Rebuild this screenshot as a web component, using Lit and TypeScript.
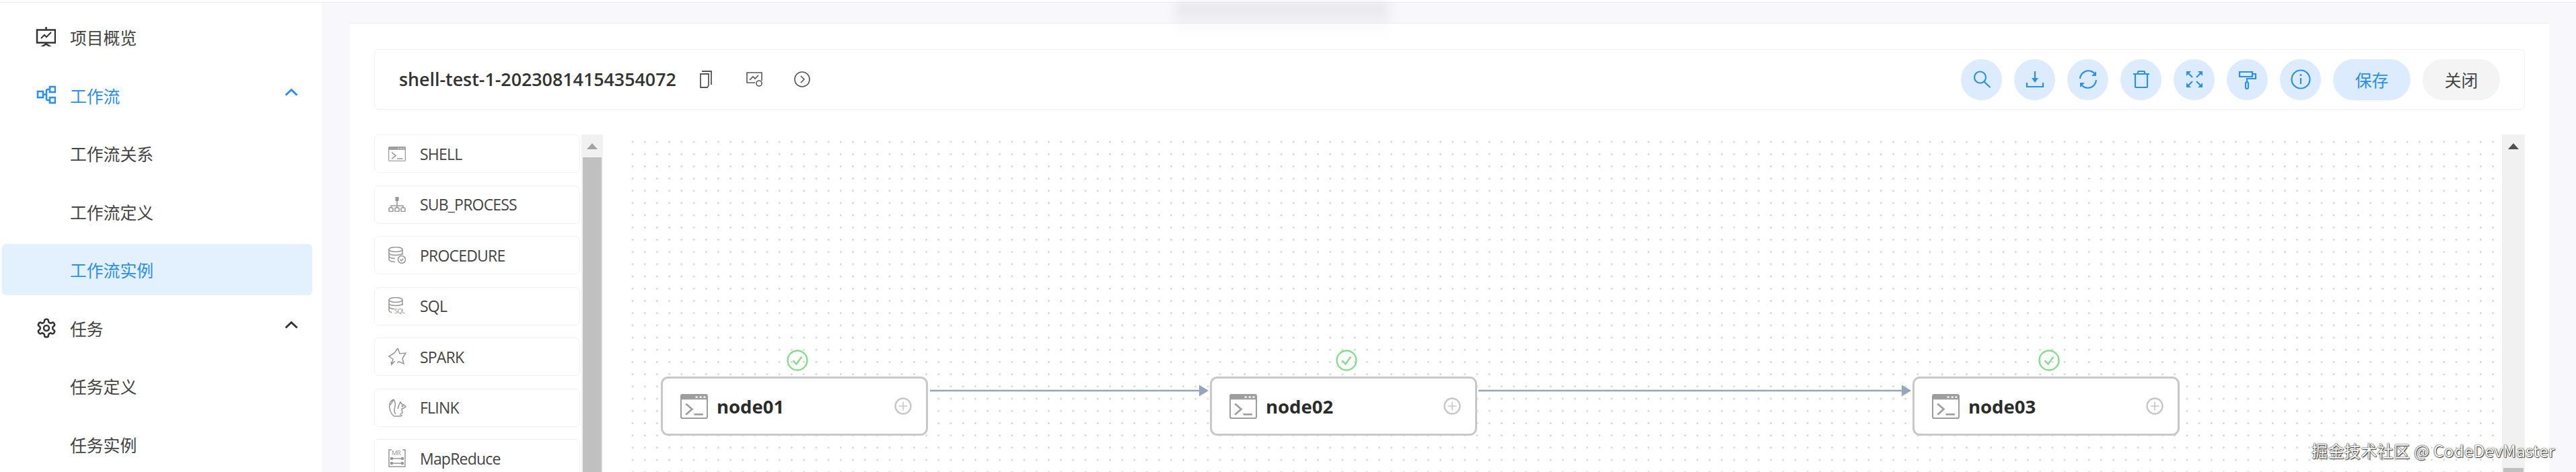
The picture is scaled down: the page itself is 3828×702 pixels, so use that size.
import { LitElement, html, css, svg } from "lit";
import { customElement } from "lit/decorators.js";

const terminal = (w: number, h: number) => html`<svg width=${w} height=${h} viewBox="0 0 40 36" preserveAspectRatio="none" fill="none">
  <rect x="1" y="1" width="38" height="34" rx="2" stroke="#9e9e9e" stroke-width="2"/>
  <rect x="1" y="1" width="38" height="7" fill="#9e9e9e"/>
  <path d="M22 4.500h3M28 4.500h3M33.500 4.500h3" stroke="#fff" stroke-width="2"/>
  <path d="M8 14l9 8-9 8" stroke="#9e9e9e" stroke-width="2.600"/>
  <path d="M20 29.500h13" stroke="#9e9e9e" stroke-width="2.600"/>
</svg>`;

const I = (w: number, h: number, body: unknown) => html`<svg width=${w} height=${h} viewBox="0 0 ${w} ${h}" fill="none" stroke="#969696" stroke-width="1.500">${body}</svg>`;

const toolIcons: Record<string, unknown> = {
  SHELL: terminal(26, 22),
  SUB_PROCESS: I(26, 22, svg`<rect x="10.500" y="0" width="5" height="6" fill="#969696" stroke="none"/><path d="M13 6v7M4 16v-3h18v3M13 13v3"/><rect x="1" y="16" width="6" height="5.500" rx="1"/><rect x="10" y="16" width="6" height="5.500" rx="1"/><rect x="19" y="16" width="6" height="5.500" rx="1"/>`),
  PROCEDURE: I(26, 26, svg`<ellipse cx="11" cy="4" rx="10" ry="3.500"/><path d="M1 4v15c0 2 4 3.500 9 3.500M21 4v8M1 9c0 2 4 3.500 10 3.500S21 11 21 9M1 14c0 2 4 3.500 9 3.500"/><circle cx="20" cy="19" r="5.500"/><path d="M17.500 19l2 2 3-3.500"/>`),
  SQL: I(27, 26, svg`<ellipse cx="11" cy="4" rx="10" ry="3.500"/><path d="M1 4v15c0 2 2 3.500 4 3.500M21 4v8M1 9c0 2 4 3.500 10 3.500S21 11 21 9M1 14c0 2 4 3.500 8 3.500"/><text x="9" y="24" font-size="9.500" font-family="Open Sans" fill="#969696" stroke="none">SQL</text>`),
  SPARK: I(27, 28, svg`<path d="M14 1l3 8 9-1-5 8 2 8-7-3-3 1M9 8l5-7M9 8L1 13l6 4-2 8 5-5M5 25l-1-4"/>`),
  FLINK: I(28, 27, svg`<path d="M8 1C3 3 1 8 2 14c1 6 3 10 7 12h8c2 0 3-1 3-2M8 1c2 3 3 6 2 10-1 5-2 8 1 12M3 9c2-2 3-4 5-8M14 15l2-6 2-4 2 3 3 1 3 3-3 2-3 1 1 6-4 3"/><circle cx="21" cy="11" r=".8" fill="#969696"/>`),
  MapReduce: I(26, 27, svg`<path d="M5 1H1v25h24V1h-4"/><path d="M4 14h18M4 21h18"/><circle cx="5" cy="14" r="1.500" fill="#969696"/><circle cx="21" cy="14" r="1.500" fill="#969696"/><circle cx="5" cy="21" r="1.500" fill="#969696"/><circle cx="21" cy="21" r="1.500" fill="#969696"/><text x="5" y="9" font-size="9.500" font-family="Open Sans" fill="#969696" stroke="none">MR</text>`),
};

const B = (body: unknown) => html`<svg width="30" height="30" viewBox="0 0 30 30" fill="none" stroke="#2a8ff0" stroke-width="2.200">${body}</svg>`;
const toolbar = [
  B(svg`<circle cx="12.500" cy="12" r="8.500"/><path d="M18.500 18.500l9 8.500"/>`),
  B(svg`<path d="M15 3v13"/><path d="M3 20v6h24v-6"/><path d="M10 13h10l-5 7z" fill="#2a8ff0" stroke="none"/>`),
  B(svg`<path d="M3 14a12.500 12.500 0 0 1 23-6M27 16a12.500 12.500 0 0 1-23 6"/><path d="M27 3v7h-7z M3 27v-7h7z" fill="#2a8ff0" stroke="none"/>`),
  B(svg`<path d="M3 7h24M10 7V4q0-1 1-1h8q1 0 1 1v3M6 7v19q0 1 1 1h16q1 0 1-1V7"/>`),
  B(svg`<path d="M5 5l7 7M25 5l-7 7M5 25l7-7M25 25l-7-7" /><path d="M3 3h7l-7 7zM27 3h-7l7 7zM3 27h7l-7-7zM27 27h-7l7-7z" fill="#2a8ff0" stroke="none"/>`),
  B(svg`<path d="M3 4h19v7H3zM22 7h5v7H14v5"/><rect x="12" y="19" width="4" height="10" rx="2"/>`),
  B(svg`<circle cx="15" cy="15" r="13.500"/><path d="M15 13v9"/><circle cx="15" cy="8.500" r="1.500" fill="#2a8ff0" stroke="none"/>`),
];

const nodes = [
  { name: "node01", left: 51 },
  { name: "node02", left: 867 },
  { name: "node03", left: 1911 },
];

@customElement("app-root")
export class AppRoot extends LitElement {
  static styles = css`
    :host { display: block; width: 3828px; height: 702px; overflow: hidden; background: #fff; font-family: "Noto Sans CJK SC", sans-serif; position: relative; }
    .topline { height: 4px; box-sizing: border-box; border-bottom: 1px solid #eaebee; }
    .shell { display: flex; height: 698px; }
    .side { width: 478px; flex: none; padding: 13px 14px 0 3px; box-sizing: border-box; display: flex; flex-direction: column; gap: 10.500px; background: #fff; }
    .mi { height: 76px; flex: none; display: flex; align-items: center; border-radius: 6px; padding-left: 101px; font-size: 24.800px; color: #444; position: relative; }
    .mi.blue { color: #2a8ff0; }
    .mi.active { background: #e3f1fe; }
    .mi svg.ic { position: absolute; left: 50px; top: 22px; }
    .mi svg.chev { position: absolute; left: 420px; top: 27px; }
    .main { flex: 1; background: #f8f8fc; padding: 30px 40px 0 42px; min-width: 0; position: relative; }
    .blob { position: absolute; z-index: 2; left: 1269px; top: -1px; width: 317px; height: 54px; pointer-events: none; background: linear-gradient(rgba(0,0,0,.075), rgba(0,0,0,.025) 60%, rgba(0,0,0,.012) 62%, transparent); filter: blur(8px); }
    .panel { background: #fff; height: 100%; box-sizing: border-box; padding: 38px 36px 0; position: relative; border-top: 1px solid #ecedf1; }
    .head { height: 90px; box-sizing: border-box; border: 1px solid #f0f0f1; border-radius: 7px; display: flex; align-items: center; padding: 0 36px; }
    .title { font: 600 26.800px "Open Sans", sans-serif; color: #333; margin: -2px 33px 0 0; }
    .ghost { display: flex; align-items: center; gap: 46px; }
    .ghost svg { display: block; }
    .spacer { flex: 1; }
    .btns { display: flex; gap: 18px; }
    .circle { width: 61px; height: 61px; border-radius: 50%; background: #dcecfe; display: flex; align-items: center; justify-content: center; }
    .pill { width: 115px; height: 61px; border-radius: 31px; display: flex; align-items: center; justify-content: center; font-size: 24.800px; }
    .save { background: #dcecfe; color: #2a8ff0; }
    .close { background: #f4f4f4; color: #444; }
    .body { display: flex; margin-top: 37px; height: 520px; }
    .left { width: 340px; flex: none; display: flex; gap: 2px; }
    .list { width: 306px; flex: none; display: flex; flex-direction: column; gap: 18.500px; }
    .it { height: 57px; flex: none; box-sizing: border-box; border: 1px solid #f1f1f2; border-radius: 7px; display: flex; align-items: center; padding-left: 20px; font: 400 23px "Open Sans", sans-serif; color: #444; letter-spacing: -0.800px; }
    .icw { width: 47px; flex: none; display: flex; align-items: center; }
    .track { width: 32px; flex: none; display: flex; flex-direction: column; background: #f1f1f1; }
    .up { height: 34px; flex: none; display: flex; align-items: center; justify-content: center; }
    .up i { width: 0; height: 0; border: 8px solid transparent; border-top: 0; border-bottom: 9px solid #a3a3a3; }
    .thumb { flex: 1; background: #c0c0c0; margin: 0 2px; }
    .canvas { flex: 1; margin-left: 35px; position: relative; background-image: radial-gradient(circle, #d2d2d2 1.100px, transparent 1.500px); background-size: 18.200px 18.200px; background-position: 0 2px; }
    .edges { position: absolute; left: 0; top: 0; pointer-events: none; }
    .node { position: absolute; top: 360px; width: 397px; height: 88px; box-sizing: border-box; border: 3px solid #c8c8c8; border-radius: 11px; background: #fff; display: flex; align-items: center; padding: 0 21px 0 26px; font: 700 27.500px "Open Sans", sans-serif; color: #2b2b2b; gap: 13px; }
    .node .plus { margin-left: auto; }
    .ok { position: absolute; left: 184px; top: -43px; }
    .node svg { flex: none; display: block; }
    .vbar { width: 34px; flex: none; background: #f1f1f1; display: flex; flex-direction: column; }
    .vbar .up i { border-bottom-color: #505050; }
    .vgap { flex: 1; }
    .vthumb { height: 24px; background: #c0c0c0; margin: 0 2px; }
    .mark { position: absolute; left: 3435px; top: 652px; font-size: 24px; color: #fff; letter-spacing: 0.400px; white-space: nowrap; text-shadow: 0 0 2px #222, 0 0 1px #222, 1px 1px 1px #444; font-family: "Noto Sans CJK SC", sans-serif; }
  `;

  render() {
    const chev = (c: string) => html`<svg class="chev" width="20" height="12" viewBox="0 0 20 12" fill="none" stroke=${c} stroke-width="3"><path d="M1.500 10.500L10 2.500l8.500 8"/></svg>`;
    return html`
      <div class="topline"></div>
      <div class="shell">
        <aside class="side">
          <div class="mi"><svg class="ic" width="30" height="30" viewBox="0 0 30 30" fill="none" stroke="#333" stroke-width="2.500"><path d="M2 5.500h27v19H2zM15.500 1v4.500M15.500 24.500v2M8 31l7.500-4.500L23 31"/><path d="M8 18l5-5 3 3 7-7" stroke-width="2"/></svg>项目概览</div>
          <div class="mi blue"><svg class="ic" width="30" height="30" viewBox="0 0 30 30" fill="none" stroke="#2a8ff0" stroke-width="2.600"><rect x="3" y="10" width="8" height="9"/><rect x="21" y="3" width="8" height="8"/><rect x="21" y="19" width="8" height="8"/><path d="M11 14.500h5M16 7v16M16 7h5M16 23h5"/></svg>工作流${chev("#2a8ff0")}</div>
          <div class="mi">工作流关系</div>
          <div class="mi">工作流定义</div>
          <div class="mi blue active">工作流实例</div>
          <div class="mi"><svg class="ic" width="32" height="32" viewBox="0 0 24 24" fill="none" stroke="#333" stroke-width="1.900"><path d="M12.220 2h-.44a2 2 0 0 0-2 2v.18a2 2 0 0 1-1 1.730l-.43.250a2 2 0 0 1-2 0l-.15-.080a2 2 0 0 0-2.730.730l-.22.380a2 2 0 0 0 .730 2.730l.15.100a2 2 0 0 1 1 1.720v.510a2 2 0 0 1-1 1.740l-.15.090a2 2 0 0 0-.730 2.730l.22.380a2 2 0 0 0 2.730.730l.15-.080a2 2 0 0 1 2 0l.43.250a2 2 0 0 1 1 1.730V20a2 2 0 0 0 2 2h.44a2 2 0 0 0 2-2v-.18a2 2 0 0 1 1-1.730l.43-.25a2 2 0 0 1 2 0l.15.080a2 2 0 0 0 2.730-.730l.22-.39a2 2 0 0 0-.730-2.730l-.15-.080a2 2 0 0 1-1-1.740v-.5a2 2 0 0 1 1-1.740l.15-.09a2 2 0 0 0 .730-2.730l-.22-.38a2 2 0 0 0-2.730-.730l-.15.080a2 2 0 0 1-2 0l-.43-.25a2 2 0 0 1-1-1.730V4a2 2 0 0 0-2-2z"/><circle cx="12" cy="12" r="3"/></svg>任务${chev("#333")}</div>
          <div class="mi">任务定义</div>
          <div class="mi">任务实例</div>
        </aside>
        <main class="main">
          <div class="blob"></div>
          <section class="panel">
            <div class="head">
              <span class="title">shell-test-1-20230814154354072</span>
              <div class="ghost">
                <svg width="24" height="26" viewBox="0 0 24 26" fill="none" stroke="#555" stroke-width="1.800"><path d="M5 1h14v20M3 5h12v17l-2 3H3z"/></svg>
                <svg width="26" height="24" viewBox="0 0 26 24" fill="none" stroke="#555" stroke-width="1.600"><path d="M14 17H2V2h22v12M6 13l5-5 3 3 5-5"/><circle cx="20" cy="18" r="4"/></svg>
                <svg width="24" height="24" viewBox="0 0 24 24" fill="none" stroke="#555" stroke-width="1.600"><circle cx="12" cy="12" r="11"/><path d="M10 7l5 5-5 5"/></svg>
              </div>
              <div class="spacer"></div>
              <div class="btns">
                ${toolbar.map((b) => html`<div class="circle">${b}</div>`)}
                <div class="pill save">保存</div>
                <div class="pill close">关闭</div>
              </div>
            </div>
            <div class="body">
              <div class="left">
                <div class="list">
                  ${["SHELL", "SUB_PROCESS", "PROCEDURE", "SQL", "SPARK", "FLINK", "MapReduce"].map(
                    (t) => html`<div class="it"><span class="icw">${toolIcons[t]}</span>${t}</div>`
                  )}
                </div>
                <div class="track"><div class="up"><i></i></div><div class="thumb"></div></div>
              </div>
              <div class="canvas">
                <svg class="edges" width="2800" height="500" fill="none">
                  <path d="M451 381H851" stroke="#94a6bc" stroke-width="2.500"/>
                  <path d="M865 381l-14-8.500v17z" fill="#94a6bc"/>
                  <path d="M1266 381H1895" stroke="#94a6bc" stroke-width="2.500"/>
                  <path d="M1909 381l-14-8.500v17z" fill="#94a6bc"/>
                </svg>
                ${nodes.map(
                  (n) => html`<div class="node" style="left:${n.left}px">
                    <svg class="ok" width="32" height="32" viewBox="0 0 32 32" fill="none" stroke="#85dc8f" stroke-width="2.400"><circle cx="16" cy="16" r="14.500"/><path d="M9.500 16l5 5.500 8-11"/></svg>
                    ${terminal(41, 37)}${n.name}
                    <svg class="plus" width="26" height="26" viewBox="0 0 26 26" fill="none" stroke="#c8c8c8" stroke-width="2.400"><circle cx="13" cy="13" r="11.500"/><path d="M13 6.500v13M6.500 13h13" stroke-width="1.600"/></svg>
                  </div>`
                )}
              </div>
              <div class="vbar"><div class="up"><i></i></div><div class="vgap"></div><div class="vthumb"></div></div>
            </div>
          </section>
        </main>
      </div>
      <div class="mark">掘金技术社区 @ CodeDevMaster</div>
    `;
  }
}
